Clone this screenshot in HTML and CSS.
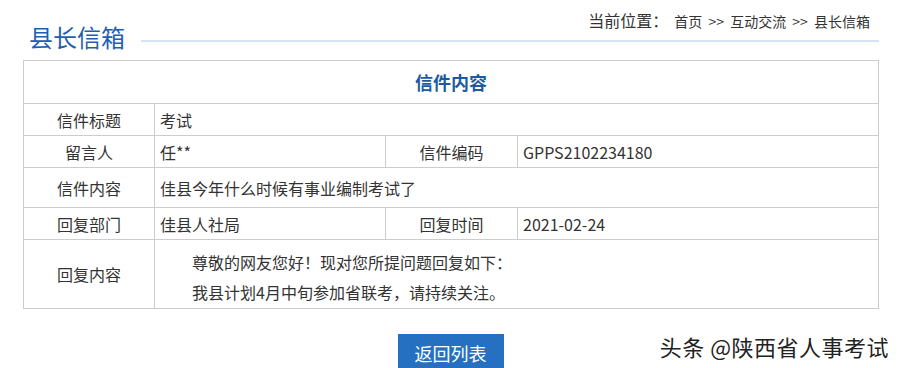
FILE: index.html
```html
<!DOCTYPE html>
<html lang="zh-CN">
<head>
    <meta charset="UTF-8">
    <title>县长信箱</title>
    <link rel="stylesheet" href="styles.css">
</head>
<body>
    <div class="wrap">
        <div class="head">
            <h1 class="title">县长信箱</h1>
            <div class="head-right">
                <div class="crumb"><span class="crumb-label">当前位置：</span> 首页 &gt;&gt; 互动交流 &gt;&gt; 县长信箱</div>
                <div class="rule"></div>
            </div>
        </div>

        <table class="letter">
            <colgroup>
                <col class="c1">
                <col class="c2">
                <col class="c3">
                <col class="c4">
            </colgroup>
            <tr class="row-head">
                <th colspan="4">信件内容</th>
            </tr>
            <tr class="row">
                <td class="label">信件标题</td>
                <td class="value" colspan="3">考试</td>
            </tr>
            <tr class="row">
                <td class="label">留言人</td>
                <td class="value">任**</td>
                <td class="label">信件编码</td>
                <td class="value">GPPS2102234180</td>
            </tr>
            <tr class="row row-tall">
                <td class="label">信件内容</td>
                <td class="value" colspan="3">佳县今年什么时候有事业编制考试了</td>
            </tr>
            <tr class="row">
                <td class="label">回复部门</td>
                <td class="value">佳县人社局</td>
                <td class="label">回复时间</td>
                <td class="value">2021-02-24</td>
            </tr>
            <tr class="row row-reply">
                <td class="label">回复内容</td>
                <td class="value reply" colspan="3">
                    <p>尊敬的网友您好！现对您所提问题回复如下：</p>
                    <p>我县计划4月中旬参加省联考，请持续关注。</p>
                </td>
            </tr>
        </table>

        <div class="actions">
            <a class="btn-back" href="#">返回列表</a>
        </div>
    </div>

    <div class="watermark">头条 @陕西省人事考试</div>
</body>
</html>
```

FILE: styles.css
```css
* {
    margin: 0;
    padding: 0;
    box-sizing: border-box;
}

body {
    font-family: "Noto Sans CJK SC", "Noto Sans", sans-serif;
    color: #333;
    background: #fff;
    width: 900px;
    height: 368px;
    overflow: hidden;
    position: relative;
}

.wrap {
    width: 855px;
    margin-left: 23px;
}

.head {
    display: flex;
    height: 60px;
}

.title {
    padding: 23px 0 0 6px;
    font-size: 24px;
    line-height: 28px;
    font-weight: normal;
    color: #1f5fae;
}

.head-right {
    flex: 1;
    margin-left: 16px;
    display: flex;
    flex-direction: column;
}

.crumb {
    height: 40px;
    padding: 9px 8px 0 0;
    text-align: right;
    font-size: 14px;
    line-height: 22px;
    word-spacing: 3px;
    color: #333;
}

.crumb-label {
    font-size: 16px;
}

.rule {
    height: 2px;
    margin-right: -1px;
    background: #d4e3f3;
}

.letter {
    width: 855px;
    border-collapse: collapse;
    table-layout: fixed;
    font-size: 16px;
}

.c1 { width: 131px; }
.c2 { width: 231px; }
.c3 { width: 132px; }
.c4 { width: 361px; }

.letter th,
.letter td {
    border: 1px solid #ccc;
}

.row-head th {
    height: 43px;
    font-size: 18px;
    font-weight: bold;
    color: #1d5b9c;
    text-align: center;
}

.row td {
    height: 32px;
    line-height: 20px;
}

.row-tall td {
    height: 40px;
}

.label {
    text-align: center;
}

.value {
    padding-left: 5px;
}

.row-reply td {
    height: 69px;
}

.reply {
    padding-top: 6px;
}

.reply p {
    text-indent: 2em;
    line-height: 30px;
}

.actions {
    padding-top: 25px;
    display: flex;
    justify-content: center;
}

.btn-back {
    display: block;
    width: 106px;
    height: 38px;
    line-height: 38px;
    text-align: center;
    background: #2670c2;
    color: #fff;
    font-size: 18px;
    text-decoration: none;
}

.watermark {
    position: absolute;
    right: 11px;
    top: 332px;
    font-size: 22px;
    line-height: 28px;
    letter-spacing: 0.5px;
    color: #222;
    text-shadow: 0 0 2px #fff, 0 0 2px #fff;
}
```
